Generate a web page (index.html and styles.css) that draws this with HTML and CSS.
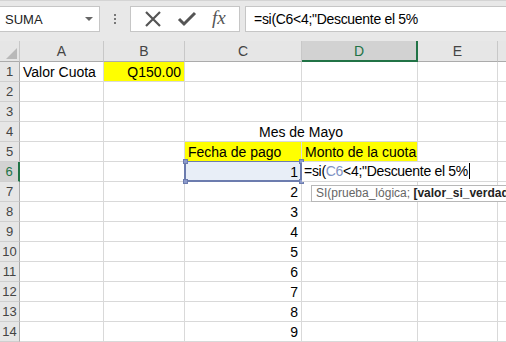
FILE: index.html
```html
<!DOCTYPE html>
<html>
<head>
<meta charset="utf-8">
<link rel="stylesheet" href="styles.css">
</head>
<body>

<div class="formula-bar">
  <div class="name-box"><span>SUMA</span><span class="caret"></span></div>
  <div class="grip"><i></i><i></i><i></i></div>
  <div class="fx-buttons">
    <svg width="18" height="18" viewBox="0 0 18 18"><path d="M2 2 L16 16 M16 2 L2 16" stroke="#555" stroke-width="2.2" fill="none"/></svg>
    <svg width="20" height="18" viewBox="0 0 20 18"><path d="M2 9 L7 14 L18 3" stroke="#555" stroke-width="3" fill="none"/></svg>
    <span class="fx">fx</span>
  </div>
  <div class="formula-input">=si(C6&lt;4;"Descuente el 5%</div>
</div>

<div class="sheet-wrap">
<table class="sheet">
  <colgroup>
    <col style="width:20px"><col style="width:84px"><col style="width:81px"><col style="width:117px"><col style="width:116px"><col style="width:80px"><col style="width:80px">
  </colgroup>
  <tr class="col-heads">
    <th class="corner"><span class="tri"></span></th><th>A</th><th>B</th><th>C</th><th class="active">D</th><th>E</th><th></th>
  </tr>
  <tr><th>1</th><td>Valor Cuota</td><td class="yellow num">Q150.00</td><td></td><td></td><td></td><td></td></tr>
  <tr><th>2</th><td></td><td></td><td></td><td></td><td></td><td></td></tr>
  <tr><th>3</th><td></td><td></td><td></td><td></td><td></td><td></td></tr>
  <tr><th>4</th><td></td><td></td><td colspan="2" class="center">Mes de Mayo</td><td></td><td></td></tr>
  <tr><th>5</th><td></td><td></td><td class="yellow">Fecha de pago</td><td class="yellow">Monto de la cuota</td><td></td><td></td></tr>
  <tr><th class="active">6</th><td></td><td></td>
    <td class="num ref">1<span class="ref-box"><i class="h tl"></i><i class="h bl"></i><i class="h tr"></i><i class="h br"></i></span></td>
    <td class="editing"><span class="edit-text">=si(<span class="ref-txt">C6</span>&lt;4;"Descuente el 5%<span class="cursor"></span></span></td><td></td><td></td></tr>
  <tr><th>7</th><td></td><td></td><td class="num">2</td>
    <td class="tip-cell"><div class="tooltip">SI(prueba_lógica; <b>[valor_si_verdadero]; [valor_si_falso])</b></div></td><td></td><td></td></tr>
  <tr><th>8</th><td></td><td></td><td class="num">3</td><td></td><td></td><td></td></tr>
  <tr><th>9</th><td></td><td></td><td class="num">4</td><td></td><td></td><td></td></tr>
  <tr><th>10</th><td></td><td></td><td class="num">5</td><td></td><td></td><td></td></tr>
  <tr><th>11</th><td></td><td></td><td class="num">6</td><td></td><td></td><td></td></tr>
  <tr><th>12</th><td></td><td></td><td class="num">7</td><td></td><td></td><td></td></tr>
  <tr><th>13</th><td></td><td></td><td class="num">8</td><td></td><td></td><td></td></tr>
  <tr><th>14</th><td></td><td></td><td class="num">9</td><td></td><td></td><td></td></tr>
</table>
</div>

</body>
</html>
```

FILE: styles.css
```css
html, body {
  margin: 0;
  overflow: hidden;
}
body {
  width: 506px;
  height: 342px;
  background: #fff;
  font-family: "Liberation Sans", Arial, sans-serif;
  font-size: 14px;
  color: #000;
}

/* formula bar */
.formula-bar {
  display: flex;
  align-items: stretch;
  height: 41px;
  box-sizing: border-box;
  padding: 5px 0 9px 0;
  background: #e8e8e8;
  border-top: 1px solid #d4d4d4;
}
.name-box {
  width: 100px;
  box-sizing: border-box;
  background: #fff;
  border: 1px solid #c6c6c6;
  border-left: none;
  display: flex;
  align-items: center;
  justify-content: space-between;
  padding: 0 6px 0 5px;
  font-size: 13px;
  color: #222;
}
.caret {
  width: 0;
  height: 0;
  border-left: 4px solid transparent;
  border-right: 4px solid transparent;
  border-top: 4px solid #666;
}
.grip {
  width: 30px;
  display: flex;
  flex-direction: column;
  align-items: center;
  justify-content: center;
  gap: 2px;
}
.grip i {
  width: 2px;
  height: 2px;
  background: #777;
}
.fx-buttons {
  width: 110px;
  box-sizing: border-box;
  background: #fff;
  border: 1px solid #c6c6c6;
  display: flex;
  align-items: center;
  justify-content: space-around;
  padding: 0 6px;
}
.fx {
  font-family: "Liberation Serif", serif;
  font-style: italic;
  font-size: 19px;
  color: #555;
  margin-top: -2px;
}
.formula-input {
  flex: 1;
  margin-left: 5px;
  background: #fff;
  border: 1px solid #c6c6c6;
  border-right: none;
  display: flex;
  align-items: center;
  padding-left: 8px;
  padding-bottom: 1px;
  white-space: nowrap;
  letter-spacing: -0.3px;
}

/* sheet grid */
.sheet-wrap {
  overflow: hidden;
  height: 301px;
}
.sheet {
  table-layout: fixed;
  border-collapse: separate;
  border-spacing: 0;
  width: 578px;
}
.sheet tr {
  height: 20px;
}
.sheet td, .sheet th {
  box-sizing: border-box;
  height: 20px;
  padding: 0 3px;
  border-right: 1px solid #d9d9d9;
  border-bottom: 1px solid #d9d9d9;
  white-space: nowrap;
  line-height: 18px;
  font-weight: normal;
}
.sheet th {
  background: #e6e6e6;
  color: #444;
  font-size: 13px;
  padding: 0;
  text-align: center;
  border-right: 1px solid #ababab;
  border-bottom: 1px solid #cfcfcf;
}
.col-heads {
  height: 21px !important;
}
.col-heads th {
  height: 21px;
  font-size: 14px;
  border-right: 1px solid #c8c8c8;
  border-bottom: 1px solid #ababab;
}
.corner {
  position: relative;
}
.tri {
  position: absolute;
  right: 2px;
  bottom: 2px;
  width: 0;
  height: 0;
  border-left: 11px solid transparent;
  border-bottom: 11px solid #b9b9b9;
}
.sheet th.active {
  background: #d2d2d2;
  color: #217346;
}
.col-heads th.active {
  border-bottom: 2px solid #217346;
}
tr th.active {
  border-right: 2px solid #217346;
}

.yellow {
  background: #ffff00;
}
.num {
  text-align: right;
}
.center {
  text-align: center;
}

/* reference highlight on C6 */
.ref {
  position: relative;
  background: #e8eef7;
}
.ref-box {
  position: absolute;
  left: -1px;
  top: -1px;
  right: -1px;
  bottom: -1px;
  border: 2px solid #6c7cae;
  border-top-width: 1px;
}
.ref-box .h {
  position: absolute;
  width: 5px;
  height: 5px;
  background: #8c9acb;
  border: 1px solid #6c7cae;
  box-sizing: border-box;
}
.h.tl { left: -3px; top: -3px; }
.h.bl { left: -3px; bottom: -4px; }
.h.tr { right: -4px; top: -3px; }
.h.br { right: -4px; bottom: -4px; }

/* cell in edit mode */
.editing {
  position: relative;
  overflow: visible;
}
.edit-text {
  position: absolute;
  left: 0;
  top: 0;
  height: 19px;
  padding: 0 4px 0 2px;
  background: #fff;
  z-index: 2;
  letter-spacing: -0.3px;
}
.ref-txt {
  color: #8193c4;
}
.cursor {
  display: inline-block;
  width: 1px;
  height: 16px;
  background: #000;
  vertical-align: -3px;
  margin-left: 1px;
}

/* function tooltip */
.tip-cell {
  position: relative;
}
.tooltip {
  position: absolute;
  left: 9px;
  top: 3px;
  z-index: 3;
  height: 17px;
  box-sizing: border-box;
  padding: 0 4px;
  line-height: 15px;
  font-size: 12px;
  color: #666;
  background: #fff;
  border: 1px solid #b8b8b8;
  white-space: nowrap;
}
.tooltip b {
  color: #222;
}
```
